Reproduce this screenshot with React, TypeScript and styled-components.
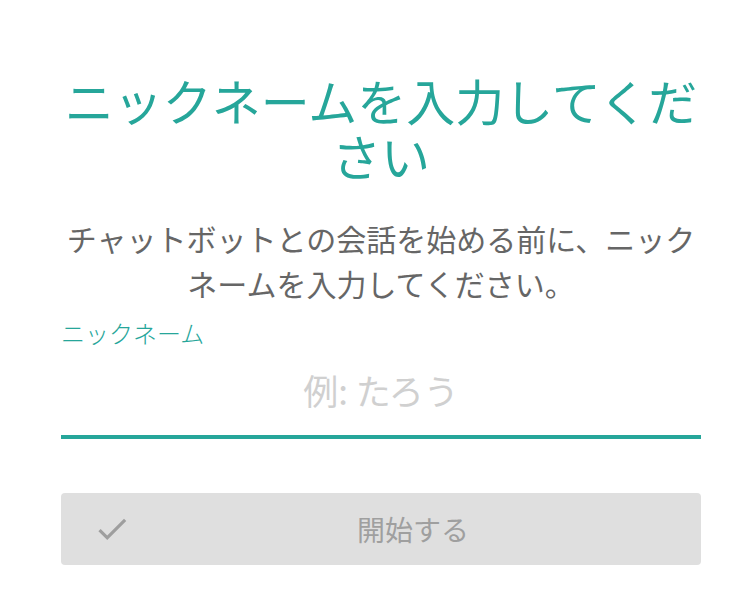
import React from "react";
import styled, { createGlobalStyle } from "styled-components";

const GlobalStyle = createGlobalStyle`
  html, body {
    margin: 0;
    padding: 0;
    background: #ffffff;
  }
  body {
    font-family: "Noto Sans CJK JP", "Noto Sans", sans-serif;
  }
  * { box-sizing: border-box; }
`;

const Page = styled.main`
  width: 640px;
  margin-left: 61px;
  padding-top: 72px;
  display: flex;
  flex-direction: column;
`;

const Title = styled.h1`
  margin: 0;
  font-size: 49px;
  line-height: 55px;
  font-weight: 400;
  color: #26a69a;
  text-align: center;
`;

const Lead = styled.p`
  margin: 34px 0 0;
  font-size: 30px;
  line-height: 45px;
  font-weight: 400;
  color: #666666;
  text-align: center;
`;

const Field = styled.div`
  margin-top: 13px;
  display: flex;
  flex-direction: column;
`;

const Label = styled.label`
  font-size: 24px;
  line-height: 28px;
  font-weight: 300;
  color: #26a69a;
`;

const Input = styled.input`
  height: 92px;
  border: none;
  border-bottom: 4px solid #26a69a;
  outline: none;
  background: transparent;
  padding: 0 0 4px;
  font-family: "Noto Sans CJK JP", "Noto Sans", sans-serif;
  font-size: 35px;
  font-weight: 400;
  color: #333;
  text-align: center;
  &::placeholder {
    color: #d0d0d0;
  }
`;

const StartButton = styled.button`
  margin-top: 54px;
  height: 72px;
  border: none;
  border-radius: 4px;
  background: #dfdfdf;
  color: #9f9f9f;
  display: flex;
  align-items: center;
  padding: 0 6px 0 32px;
  font-family: "Noto Sans CJK JP", "Noto Sans", sans-serif;
  font-size: 28px;
  font-weight: 400;
  cursor: default;
`;

const IconSlot = styled.span`
  display: flex;
  flex: none;
  color: #9e9e9e;
`;

const ButtonText = styled.span`
  flex: 1;
  text-align: center;
  line-height: 1;
`;

const CheckIcon = () => (
  <svg width="38" height="38" viewBox="0 0 24 24" fill="currentColor" aria-hidden="true">
    <path d="M9 16.17L4.83 12l-1.42 1.41L9 19 21 7l-1.41-1.41z" />
  </svg>
);

export default function App() {
  return (
    <>
      <GlobalStyle />
      <Page>
        <Title>ニックネームを入力してください</Title>
        <Lead>チャットボットとの会話を始める前に、ニックネームを入力してください。</Lead>
        <Field>
          <Label htmlFor="nick">ニックネーム</Label>
          <Input id="nick" type="text" placeholder="例: たろう" />
        </Field>
        <StartButton type="button" disabled>
          <IconSlot>
            <CheckIcon />
          </IconSlot>
          <ButtonText>開始する</ButtonText>
        </StartButton>
      </Page>
    </>
  );
}
